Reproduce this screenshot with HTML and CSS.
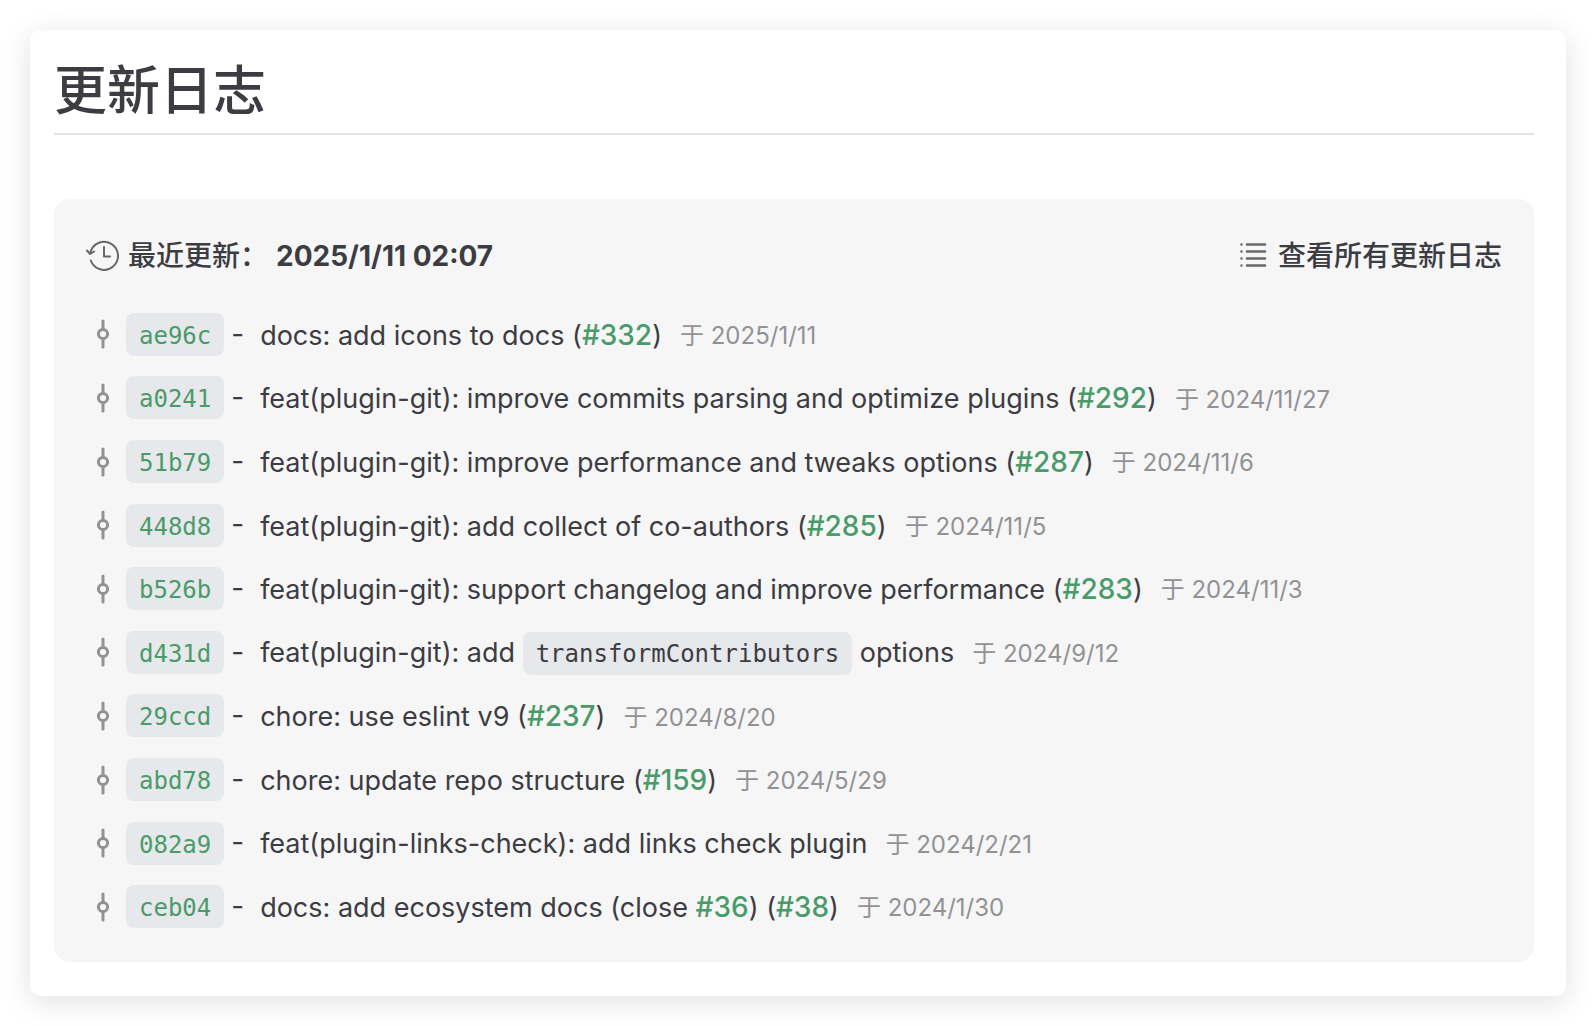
FILE: index.html
```
<!DOCTYPE html>
<html lang="zh-CN">
<head>
<meta charset="utf-8">
<meta name="viewport" content="width=device-width, initial-scale=1">
<title>更新日志</title>
<link rel="stylesheet" href="styles.css">
</head>
<body>
<svg class="sprite" aria-hidden="true">
  <symbol id="commit" viewBox="0 0 32 32">
    <circle cx="16" cy="16" r="4.6"/>
    <path d="M16 3v8.400M16 20.600V29"/>
  </symbol>
</svg>
<main class="card">
  <h1 class="title">更新日志</h1>
  <section class="changelog">
    <header class="changelog-header">
      <p class="latest">
        <svg class="icon icon-history" viewBox="0 0 34 34" aria-hidden="true"><path d="M4.300 15A14 14 0 1 1 4.800 22.500M1 12.500 4.100 16l4-2.500M18 9v9.500h6"/></svg>
        <span>最近更新：</span>
        <time>2025/1/11 02:07</time>
      </p>
      <a class="view-all" href="#all">
        <svg class="icon icon-list" viewBox="0 0 28 28" aria-hidden="true"><path d="M8 3.500h18M8 10.500h18M8 17.500h18M8 24.500h18M2.500 3.500h0M2.500 10.500h0M2.500 17.500h0M2.500 24.500h0"/></svg>
        <span>查看所有更新日志</span>
      </a>
    </header>
    <ul class="commits">
      <li class="commit"><svg class="icon-commit"><use href="#commit"/></svg><a class="hash" href="#ae96c">ae96c</a><span class="dash">-</span><span class="message">docs: add icons to docs (<a href="#332">#332</a>)</span><time class="date">于 2025/1/11</time></li>
      <li class="commit"><svg class="icon-commit"><use href="#commit"/></svg><a class="hash" href="#a0241">a0241</a><span class="dash">-</span><span class="message">feat(plugin-git): improve commits parsing and optimize plugins (<a href="#292">#292</a>)</span><time class="date">于 2024/11/27</time></li>
      <li class="commit"><svg class="icon-commit"><use href="#commit"/></svg><a class="hash" href="#51b79">51b79</a><span class="dash">-</span><span class="message">feat(plugin-git): improve performance and tweaks options (<a href="#287">#287</a>)</span><time class="date">于 2024/11/6</time></li>
      <li class="commit"><svg class="icon-commit"><use href="#commit"/></svg><a class="hash" href="#448d8">448d8</a><span class="dash">-</span><span class="message">feat(plugin-git): add collect of co-authors (<a href="#285">#285</a>)</span><time class="date">于 2024/11/5</time></li>
      <li class="commit"><svg class="icon-commit"><use href="#commit"/></svg><a class="hash" href="#b526b">b526b</a><span class="dash">-</span><span class="message">feat(plugin-git): support changelog and improve performance (<a href="#283">#283</a>)</span><time class="date">于 2024/11/3</time></li>
      <li class="commit"><svg class="icon-commit"><use href="#commit"/></svg><a class="hash" href="#d431d">d431d</a><span class="dash">-</span><span class="message">feat(plugin-git): add <code>transformContributors</code> options</span><time class="date">于 2024/9/12</time></li>
      <li class="commit"><svg class="icon-commit"><use href="#commit"/></svg><a class="hash" href="#29ccd">29ccd</a><span class="dash">-</span><span class="message">chore: use eslint v9 (<a href="#237">#237</a>)</span><time class="date">于 2024/8/20</time></li>
      <li class="commit"><svg class="icon-commit"><use href="#commit"/></svg><a class="hash" href="#abd78">abd78</a><span class="dash">-</span><span class="message">chore: update repo structure (<a href="#159">#159</a>)</span><time class="date">于 2024/5/29</time></li>
      <li class="commit"><svg class="icon-commit"><use href="#commit"/></svg><a class="hash" href="#082a9">082a9</a><span class="dash">-</span><span class="message">feat(plugin-links-check): add links check plugin</span><time class="date">于 2024/2/21</time></li>
      <li class="commit"><svg class="icon-commit"><use href="#commit"/></svg><a class="hash" href="#ceb04">ceb04</a><span class="dash">-</span><span class="message">docs: add ecosystem docs (close <a href="#36">#36</a>) (<a href="#38">#38</a>)</span><time class="date">于 2024/1/30</time></li>
    </ul>
  </section>
</main>
</body>
</html>
```
FILE: styles.css
```
* {
  box-sizing: border-box;
}

body {
  margin: 0;
  padding: 30px;
  background: #fff;
  color: #3c3c43;
  font: 28px/1.7 Inter, "Noto Sans CJK SC", sans-serif;
}

.sprite {
  display: none;
}

.card {
  padding: 24px 32px 34px 24px;
  border-radius: 10px;
  background: #fff;
  box-shadow: 0 6px 30px rgba(0, 0, 0, 0.12);
}

.title {
  margin: 0 0 64px;
  padding-bottom: 4px;
  border-bottom: 2px solid #e2e2e3;
  font-size: 53px;
  font-weight: 500;
  line-height: 75px;
}

.changelog {
  padding: 34px 32px 31px;
  border-radius: 16px;
  background: #f6f6f6;
}

.changelog-header,
.latest,
.view-all,
.commit {
  display: flex;
  align-items: center;
}

.changelog-header {
  justify-content: space-between;
}

.latest {
  margin: 0;
  gap: 8px;
  font-weight: 500;
}

.latest time {
  font-weight: 700;
}

.view-all {
  gap: 11px;
  color: inherit;
  font-weight: 500;
  text-decoration: none;
}

.icon {
  margin-bottom: 4px;
  fill: none;
  stroke: #67676c;
  stroke-width: 2;
  stroke-linecap: round;
  stroke-linejoin: round;
}

.icon-history {
  width: 34px;
  height: 34px;
}

.icon-list {
  width: 28px;
  height: 28px;
  stroke-width: 2.5;
}

.commits {
  display: grid;
  gap: 16px;
  margin: 30px 0 0;
  padding: 0;
  list-style: none;
}

.icon-commit {
  width: 32px;
  height: 32px;
  margin: 0 7px 0 1px;
  fill: none;
  stroke: #929295;
  stroke-width: 3;
  stroke-linecap: round;
}

.commit a {
  color: #4a9b6a;
  font-size: 28px;
  font-weight: 500;
  text-decoration: none;
}

.commit .hash,
code {
  padding: 8px 13px 4px;
  border-radius: 8px;
  background: #e7e8ec;
  font-family: "DejaVu Sans Mono", monospace;
  font-size: 24px;
  font-weight: 400;
  line-height: 31px;
}

code {
  padding: 8px 13px 7px;
}

.dash {
  margin: 0 16px 0 7px;
}

.message {
  padding-top: 2px;
  font-size: 27px;
  line-height: 44px;
}

.date {
  margin-left: 18px;
  padding-top: 4px;
  color: #929295;
  font-size: 24px;
}
```
